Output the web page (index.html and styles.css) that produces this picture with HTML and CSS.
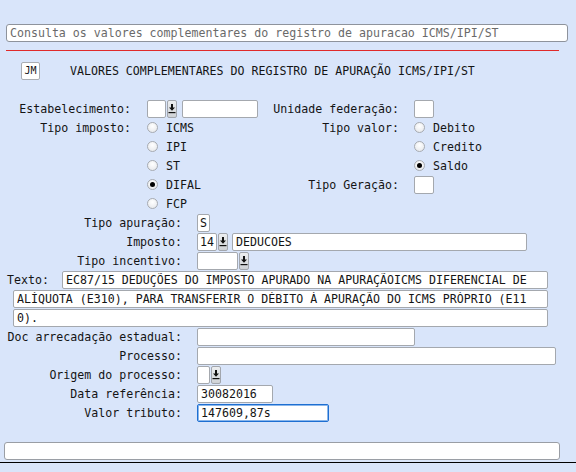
FILE: index.html
```html
<!DOCTYPE html>
<html>
<head>
	<title>Valores complementares</title>
	<link rel="stylesheet" href="styles.css">
</head>
<body>

<div class="page">

	<input class="cmd" type="text" value="Consulta os valores complementares do registro de apuracao ICMS/IPI/ST">
	<div class="rule"></div>

	<div class="title">
		<span class="jm">JM</span>
		<span class="title-text">VALORES COMPLEMENTARES DO REGISTRO DE APURAÇÃO ICMS/IPI/ST</span>
	</div>

	<!-- top block, two columns -->
	<div class="top">
		<div class="row">
			<div class="cell-l">
				<label class="lab">Estabelecimento:</label>
				<input class="fld w19" type="text">
				<button class="drop"><svg viewBox="0 0 8 11" width="8" height="11"><path d="M3 1h2v3.5h2l-3 3.2-3-3.2h2z" fill="#111"/><rect x="0.5" y="9" width="7" height="1.2" fill="#111"/></svg></button>
				<input class="fld w76 gap5" type="text">
			</div>
			<div class="cell-r">
				<label class="lab">Unidade federação:</label>
				<input class="fld w20" type="text">
			</div>
		</div>
		<div class="row">
			<div class="cell-l">
				<label class="lab">Tipo imposto:</label>
				<label class="opt"><input type="radio" name="imp">ICMS</label>
			</div>
			<div class="cell-r">
				<label class="lab">Tipo valor:</label>
				<label class="opt"><input type="radio" name="val">Debito</label>
			</div>
		</div>
		<div class="row">
			<div class="cell-l">
				<span class="lab"></span>
				<label class="opt"><input type="radio" name="imp">IPI</label>
			</div>
			<div class="cell-r">
				<span class="lab"></span>
				<label class="opt"><input type="radio" name="val">Credito</label>
			</div>
		</div>
		<div class="row">
			<div class="cell-l">
				<span class="lab"></span>
				<label class="opt"><input type="radio" name="imp">ST</label>
			</div>
			<div class="cell-r">
				<span class="lab"></span>
				<label class="opt"><input type="radio" name="val" checked>Saldo</label>
			</div>
		</div>
		<div class="row">
			<div class="cell-l">
				<span class="lab"></span>
				<label class="opt"><input type="radio" name="imp" checked>DIFAL</label>
			</div>
			<div class="cell-r">
				<label class="lab">Tipo Geração:</label>
				<input class="fld w20" type="text">
			</div>
		</div>
		<div class="row">
			<div class="cell-l">
				<span class="lab"></span>
				<label class="opt"><input type="radio" name="imp">FCP</label>
			</div>
		</div>
	</div>

	<!-- lower block -->
	<div class="low">
		<div class="row">
			<label class="lab2">Tipo apuração:</label>
			<input class="fld w13 tight" type="text" value="S">
		</div>
		<div class="row">
			<label class="lab2">Imposto:</label>
			<input class="fld w20 tight" type="text" value="14">
			<button class="drop"><svg viewBox="0 0 8 11" width="8" height="11"><path d="M3 1h2v3.5h2l-3 3.2-3-3.2h2z" fill="#111"/><rect x="0.5" y="9" width="7" height="1.2" fill="#111"/></svg></button>
			<input class="fld w295 gap4" type="text" value="DEDUCOES">
		</div>
		<div class="row">
			<label class="lab2">Tipo incentivo:</label>
			<input class="fld w41" type="text">
			<button class="drop gap2"><svg viewBox="0 0 8 11" width="8" height="11"><path d="M3 1h2v3.5h2l-3 3.2-3-3.2h2z" fill="#111"/><rect x="0.5" y="9" width="7" height="1.2" fill="#111"/></svg></button>
		</div>
		<div class="row">
			<label class="lab-txt">Texto:</label>
			<input class="fld txt1" type="text" value="EC87/15 DEDUÇÕES DO IMPOSTO APURADO NA APURAÇÃOICMS DIFERENCIAL DE">
		</div>
		<div class="row">
			<input class="fld txt2" type="text" value="ALÍQUOTA (E310), PARA TRANSFERIR O DÉBITO À APURAÇÃO DO ICMS PRÓPRIO (E11">
		</div>
		<div class="row">
			<input class="fld txt2" type="text" value="0).">
		</div>
		<div class="row">
			<label class="lab2">Doc arrecadação estadual:</label>
			<input class="fld w218" type="text">
		</div>
		<div class="row">
			<label class="lab2">Processo:</label>
			<input class="fld w359" type="text">
		</div>
		<div class="row">
			<label class="lab2">Origem do processo:</label>
			<input class="fld w13" type="text">
			<button class="drop gap2"><svg viewBox="0 0 8 11" width="8" height="11"><path d="M3 1h2v3.5h2l-3 3.2-3-3.2h2z" fill="#111"/><rect x="0.5" y="9" width="7" height="1.2" fill="#111"/></svg></button>
		</div>
		<div class="row">
			<label class="lab2">Data referência:</label>
			<input class="fld w76" type="text" value="30082016">
		</div>
		<div class="row">
			<label class="lab2">Valor tributo:</label>
			<input class="fld w132 focus" type="text" value="147609,87s">
		</div>
	</div>

	<input class="msg" type="text">
	<div class="baseline"></div>

</div>

</body>
</html>
```

FILE: styles.css
```css
body {
	margin: 0;
	background-color: #d9e5fa;
	font-family: "DejaVu Sans Mono", "Liberation Mono", monospace;
	font-size: 11.6px;
	color: #141414;
}

.page {
	width: 576px;
	height: 472px;
	overflow: hidden;
}

input,
button {
	font: inherit;
	margin: 0;
	box-sizing: border-box;
}

.cmd {
	display: block;
	margin: 24px 0 0 6px;
	width: 562px;
	height: 18px;
	padding: 0 3px;
	border: 1px solid #8e939c;
	border-radius: 3px;
	background-color: #fff;
	color: #6a6a6a;
}

.rule {
	margin: 8px 0 0 6px;
	width: 553px;
	height: 1px;
	background-color: #e02a2a;
}

.title {
	display: flex;
	align-items: center;
	margin-top: 11px;
	height: 18px;
}

.jm {
	margin-left: 21px;
	width: 19px;
	height: 18px;
	line-height: 16px;
	box-sizing: border-box;
	border: 1px solid #a9adb3;
	border-radius: 2px;
	background-color: #fff;
	font-size: 10px;
	text-align: center;
}

.title-text {
	margin-left: 30px;
}

.top {
	margin-top: 19px;
}

.row {
	display: flex;
	align-items: center;
	height: 19px;
}

.cell-l,
.cell-r {
	display: flex;
	align-items: center;
	height: 19px;
}

.cell-l {
	width: 270px;
}

.lab {
	display: inline-block;
	text-align: right;
	white-space: nowrap;
}

.cell-l .lab {
	width: 131px;
	margin-right: 16px;
}

.cell-r .lab {
	width: 129px;
	margin-right: 15px;
}

.lab2 {
	width: 182px;
	margin-right: 15px;
	text-align: right;
	white-space: nowrap;
}

.lab-txt {
	width: 55px;
	margin-left: 7px;
}

.fld {
	height: 18px;
	padding: 0 3px;
	border: 1px solid #a4a8ae;
	border-radius: 2px;
	background-color: #fff;
	color: #141414;
	outline: none;
}

.tight {
	padding: 0 1px 0 2px;
}

.focus {
	border-color: #1e6fd2;
	box-shadow: inset 0 0 0 1px #8ab6ea;
}

.w13 { width: 13px; }
.w19 { width: 19px; }
.w20 { width: 20px; }
.w41 { width: 41px; }
.w76 { width: 76px; }
.w132 { width: 132px; }
.w218 { width: 218px; }
.w295 { width: 295px; }
.w359 { width: 359px; }

.gap2 { margin-left: 2px; }
.gap4 { margin-left: 4px; }
.gap5 { margin-left: 5px; }

.txt1 {
	width: 486px;
}

.txt2 {
	margin-left: 13px;
	width: 535px;
}

.drop {
	display: flex;
	align-items: center;
	justify-content: center;
	width: 10px;
	height: 18px;
	margin-left: 1px;
	padding: 0;
	border: 1px solid #a2a6ad;
	border-radius: 2px;
	background: linear-gradient(#eceef0, #cfd2d6);
}

.opt {
	display: flex;
	align-items: center;
}

.opt input {
	appearance: none;
	-webkit-appearance: none;
	width: 11px;
	height: 11px;
	margin: 0 8px 0 0;
	border: 1px solid #a7abb1;
	border-radius: 50%;
	background: radial-gradient(circle at 50% 35%, #ffffff, #e3e5e8);
	position: relative;
}

.opt input:checked::after {
	content: "";
	position: absolute;
	left: 2px;
	top: 2px;
	width: 5px;
	height: 5px;
	border-radius: 50%;
	background-color: #000;
}

.msg {
	display: block;
	margin: 20px 0 0 4px;
	width: 556px;
	height: 18px;
	border: 1px solid #9a9ea5;
	border-radius: 3px;
	background-color: #fff;
}

.baseline {
	margin-top: 2px;
	height: 1px;
	background-color: #000;
}
```
